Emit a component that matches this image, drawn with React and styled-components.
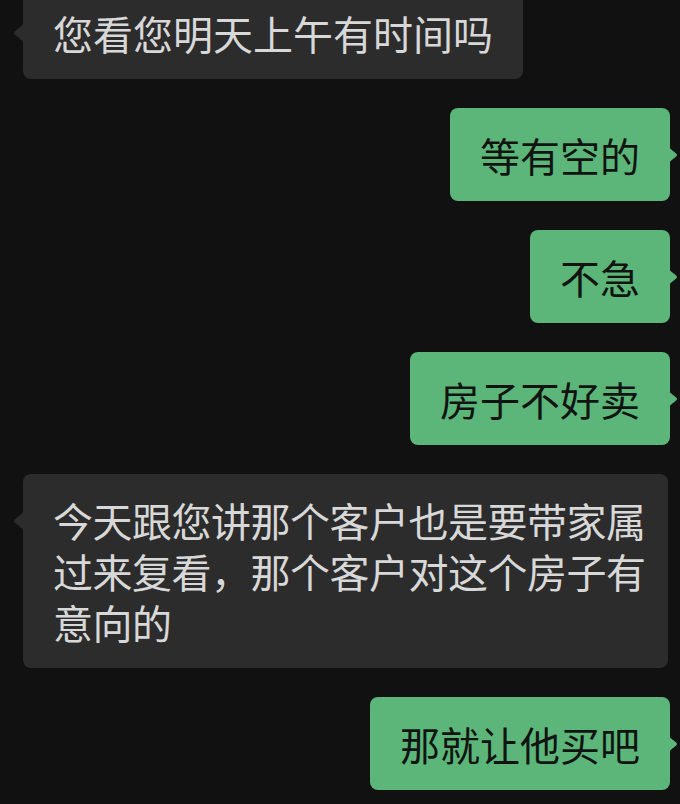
import React from 'react';
import styled, { createGlobalStyle } from 'styled-components';

const Global = createGlobalStyle`
  html, body {
    margin: 0;
    padding: 0;
    background: #111111;
    height: 100%;
    overflow: hidden;
  }
`;

const Chat = styled.div`
  display: flex;
  flex-direction: column;
  gap: 29px;
  margin-top: -14px;
  padding: 0 10px 0 23px;
  font-family: 'Noto Sans CJK SC', 'Noto Sans', sans-serif;
`;

const Row = styled.div`
  display: flex;
  justify-content: ${(p) => (p.$mine ? 'flex-end' : 'flex-start')};
`;

const Bubble = styled.div`
  position: relative;
  max-width: 645px;
  box-sizing: border-box;
  padding: 20.5px ${(p) => (p.$compact ? '22px' : '30px')} 20.5px 30px;
  border-radius: 8px;
  font-size: 40px;
  line-height: ${(p) => (p.$compact ? '51px' : '52px')};
  letter-spacing: ${(p) => (p.$compact ? '-0.5px' : '0')};
  background: ${(p) => (p.$mine ? '#5cb679' : '#2c2c2c')};
  color: ${(p) => (p.$mine ? '#111411' : '#d8d8d8')};
`;

const Tail = styled.svg`
  position: absolute;
  top: 35px;
  width: 11px;
  height: 24px;
  ${(p) => (p.$mine ? 'right: -8px; transform: scaleX(-1);' : 'left: -10px;')}
  fill: ${(p) => (p.$mine ? '#5cb679' : '#2c2c2c')};
`;

const messages = [
  { mine: false, text: '您看您明天上午有时间吗' },
  { mine: true, text: '等有空的' },
  { mine: true, text: '不急' },
  { mine: true, text: '房子不好卖' },
  {
    mine: false,
    compact: true,
    text: '今天跟您讲那个客户也是要带家属过来复看，那个客户对这个房子有意向的',
  },
  { mine: true, text: '那就让他买吧' },
];

function Message({ mine, compact, text }) {
  return (
    <Row $mine={mine}>
      <Bubble $mine={mine} $compact={compact}>
        <Tail $mine={mine} viewBox="0 0 11 24">
          <path d="M11 0 C11 4 6 7 2.5 10 C0.5 11.2 0.5 12.8 2.5 14 C6 17 11 20 11 24 Z" />
        </Tail>
        {text}
      </Bubble>
    </Row>
  );
}

export default function App() {
  return (
    <>
      <Global />
      <Chat>
        {messages.map((m, i) => (
          <Message key={i} {...m} />
        ))}
      </Chat>
    </>
  );
}
